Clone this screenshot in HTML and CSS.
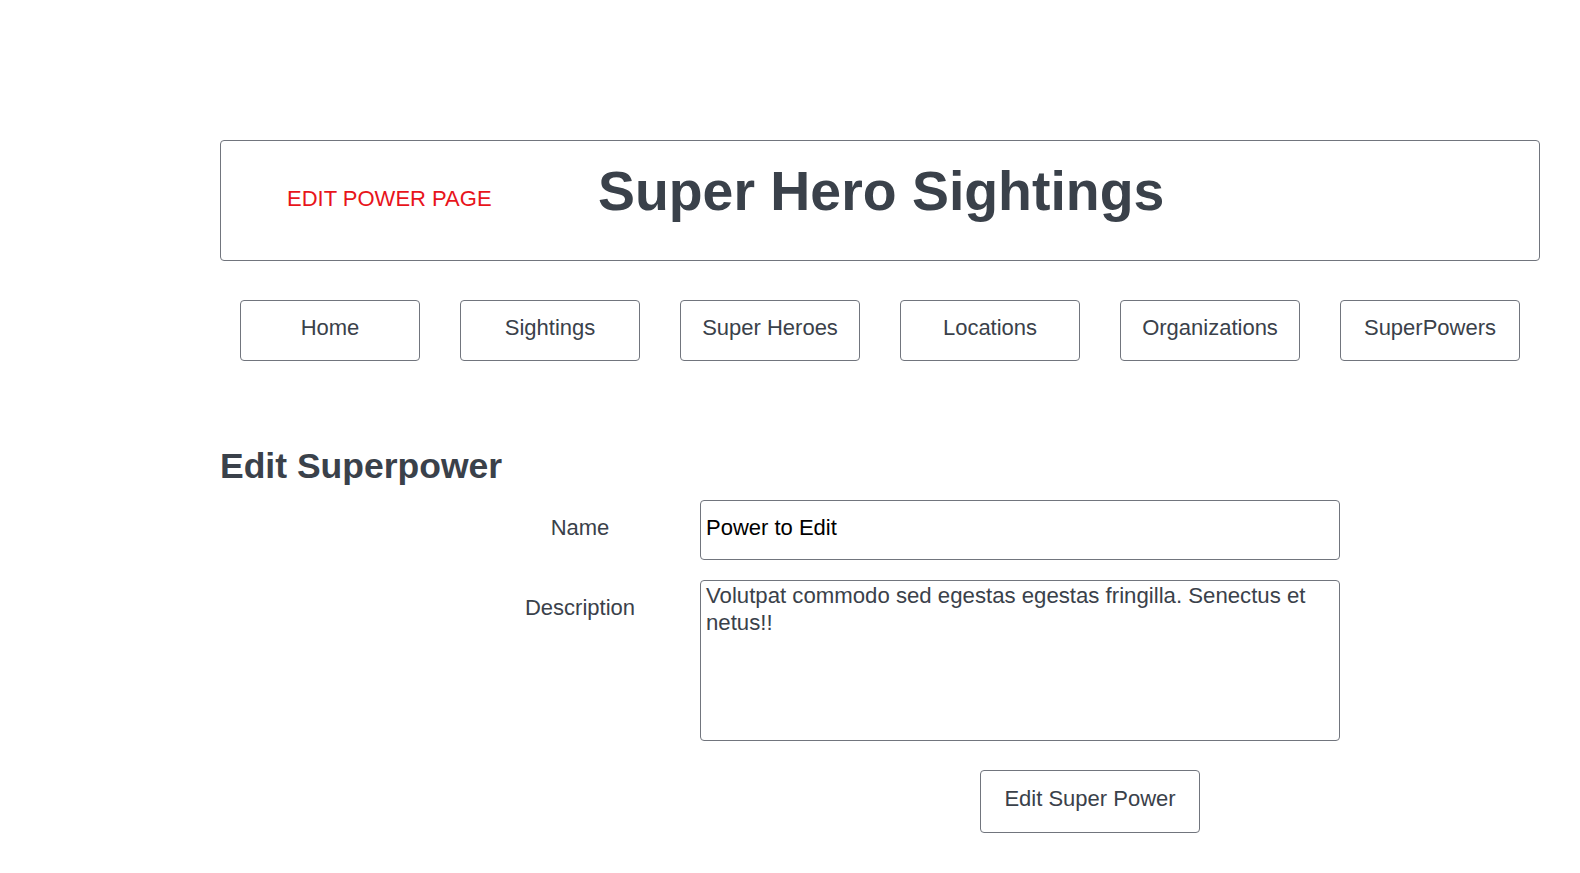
FILE: index.html
```html
<!DOCTYPE html>
<html lang="en">
<head>
<meta charset="utf-8">
<title>Edit Power Page</title>
<link rel="stylesheet" href="styles.css">
</head>
<body>
<div class="page">
  <header class="header">
    <div class="page-tag">EDIT POWER PAGE</div>
    <h1 class="site-title">Super Hero Sightings</h1>
  </header>
  <nav class="nav">
    <a class="nav-btn" href="#">Home</a>
    <a class="nav-btn" href="#">Sightings</a>
    <a class="nav-btn" href="#">Super Heroes</a>
    <a class="nav-btn" href="#">Locations</a>
    <a class="nav-btn" href="#">Organizations</a>
    <a class="nav-btn" href="#">SuperPowers</a>
  </nav>
  <h2 class="section-title">Edit Superpower</h2>
  <form class="form">
    <label class="form-label" for="name">Name</label>
    <input class="form-input" id="name" type="text" value="Power to Edit">
    <label class="form-label" for="desc">Description</label>
    <textarea class="form-textarea" id="desc">Volutpat commodo sed egestas egestas fringilla. Senectus et netus!!</textarea>
    <div class="form-actions">
      <button class="submit-btn" type="button">Edit Super Power</button>
    </div>
  </form>
</div>
</body>
</html>
```

FILE: styles.css
```css
* {
  box-sizing: border-box;
}

html, body {
  margin: 0;
  padding: 0;
  background: #ffffff;
}

body {
  font-family: "Liberation Sans", Arial, sans-serif;
  color: #3a414a;
}

.page {
  padding: 140px 0 0 220px;
  width: 1540px;
}

.header {
  display: flex;
  align-items: center;
  width: 1320px;
  height: 121px;
  border: 1px solid #71757d;
  border-radius: 4px;
  padding-left: 66px;
}

.page-tag {
  width: 311px;
  flex: none;
  font-size: 22px;
  line-height: 22px;
  color: #e8141b;
  margin-bottom: 3px;
}

.site-title {
  margin: 0 0 19px 0;
  font-size: 55.4px;
  line-height: 56px;
  font-weight: bold;
  color: #3a414a;
}

.nav {
  display: flex;
  gap: 40px;
  padding: 0 20px;
  margin-top: 39px;
  width: 1320px;
}

.nav-btn {
  display: flex;
  align-items: center;
  justify-content: center;
  width: 180px;
  height: 61px;
  border: 1px solid #71757d;
  border-radius: 4px;
  font-size: 22px;
  color: #3a414a;
  text-decoration: none;
  padding-bottom: 5px;
}

.section-title {
  margin: 87px 0 0 0;
  font-size: 35.5px;
  line-height: 36px;
  font-weight: bold;
  color: #3a414a;
}

.form {
  display: grid;
  grid-template-columns: 240px 640px;
  row-gap: 20px;
  margin: 16px 0 0 240px;
}

.form-label {
  text-align: center;
  font-size: 22px;
  padding-top: 15px;
  color: #3a414a;
}

.form-input {
  height: 60px;
  width: 640px;
  border: 1px solid #71757d;
  border-radius: 4px;
  padding: 0 5px 4px 5px;
  font-family: "Liberation Sans", Arial, sans-serif;
  font-size: 22px;
  color: #000000;
  background: #ffffff;
  outline: none;
}

.form-textarea {
  height: 161px;
  width: 640px;
  border: 1px solid #71757d;
  border-radius: 4px;
  padding: 1px 5px;
  font-family: "Liberation Sans", Arial, sans-serif;
  font-size: 22.2px;
  line-height: 27px;
  color: #3a414a;
  background: #ffffff;
  resize: none;
  overflow: hidden;
  outline: none;
}

.form-actions {
  grid-column: 2;
  padding-left: 280px;
  padding-top: 9px;
}

.submit-btn {
  width: 220px;
  height: 63px;
  border: 1px solid #71757d;
  border-radius: 4px;
  background: #ffffff;
  font-family: "Liberation Sans", Arial, sans-serif;
  font-size: 22px;
  color: #3a414a;
  padding: 0 0 5px 0;
}
```
